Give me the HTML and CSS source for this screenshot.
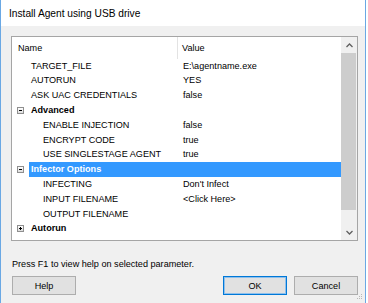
FILE: index.html
```html
<!DOCTYPE html>
<html lang="en">
<head>
    <meta charset="UTF-8">
    <title>Install Agent using USB drive</title>
    <link rel="stylesheet" href="styles.css">
</head>
<body>
    <div class="window">
        <div class="titlebar">Install Agent using USB drive</div>

        <div class="client">
            <div class="grid">
                <div class="grid-main">
                    <div class="grid-head">
                        <span class="col-name">Name</span>
                        <span class="col-value">Value</span>
                    </div>

                    <div class="row">
                        <span class="gutter"></span>
                        <span class="name">TARGET_FILE</span>
                        <span class="value">E:\agentname.exe</span>
                    </div>
                    <div class="row">
                        <span class="gutter"></span>
                        <span class="name">AUTORUN</span>
                        <span class="value">YES</span>
                    </div>
                    <div class="row">
                        <span class="gutter"></span>
                        <span class="name">ASK UAC CREDENTIALS</span>
                        <span class="value">false</span>
                    </div>

                    <div class="row cat">
                        <span class="gutter"><span class="expander"></span></span>
                        <span class="name">Advanced</span>
                    </div>
                    <div class="row">
                        <span class="gutter"></span>
                        <span class="name sub">ENABLE INJECTION</span>
                        <span class="value">false</span>
                    </div>
                    <div class="row">
                        <span class="gutter"></span>
                        <span class="name sub">ENCRYPT CODE</span>
                        <span class="value">true</span>
                    </div>
                    <div class="row">
                        <span class="gutter"></span>
                        <span class="name sub">USE SINGLESTAGE AGENT</span>
                        <span class="value">true</span>
                    </div>

                    <div class="row cat selected">
                        <span class="gutter"><span class="expander"></span></span>
                        <span class="name">Infector Options</span>
                    </div>
                    <div class="row">
                        <span class="gutter"></span>
                        <span class="name sub">INFECTING</span>
                        <span class="value">Don't Infect</span>
                    </div>
                    <div class="row">
                        <span class="gutter"></span>
                        <span class="name sub">INPUT FILENAME</span>
                        <span class="value">&lt;Click Here&gt;</span>
                    </div>
                    <div class="row">
                        <span class="gutter"></span>
                        <span class="name sub">OUTPUT FILENAME</span>
                        <span class="value"></span>
                    </div>

                    <div class="row cat">
                        <span class="gutter"><span class="expander collapsed"></span></span>
                        <span class="name">Autorun</span>
                    </div>
                    <!-- next category, scrolled out of view -->
                    <div class="row cat">
                        <span class="gutter"><span class="expander collapsed"></span></span>
                        <span class="name"></span>
                    </div>
                </div>

                <div class="scrollbar">
                    <div class="arrow">
                        <svg width="7" height="5" viewBox="0 0 7 5"><polyline points="0.5,4 3.5,1 6.5,4" fill="none" stroke="#606060" stroke-width="1.3"/></svg>
                    </div>
                    <div class="track">
                        <div class="thumb"></div>
                    </div>
                    <div class="arrow">
                        <svg width="7" height="5" viewBox="0 0 7 5"><polyline points="0.5,1 3.5,4 6.5,1" fill="none" stroke="#606060" stroke-width="1.3"/></svg>
                    </div>
                </div>
            </div>

            <div class="status">Press F1 to view help on selected parameter.</div>

            <div class="buttons">
                <button class="btn">Help</button>
                <span class="spacer"></span>
                <button class="btn default">OK</button>
                <button class="btn">Cancel</button>
            </div>
        </div>

        <svg class="grip" width="6" height="6" viewBox="0 0 6 6">
            <rect x="4" y="0" width="1" height="1" fill="#b8b8b8"/>
            <rect x="2" y="2" width="1" height="1" fill="#b8b8b8"/>
            <rect x="4" y="2" width="1" height="1" fill="#b8b8b8"/>
            <rect x="0" y="4" width="1" height="1" fill="#b8b8b8"/>
            <rect x="2" y="4" width="1" height="1" fill="#b8b8b8"/>
            <rect x="4" y="4" width="1" height="1" fill="#b8b8b8"/>
        </svg>
    </div>
</body>
</html>
```

FILE: styles.css
```css
body {
    margin: 0;
    background-color: #ffffff;
    font-family: "Liberation Sans", Arial, sans-serif;
    color: #000;
}
.window {
    position: relative;
    width: 366px;
    height: 303px;
    box-sizing: border-box;
    border-left: 1px solid #6aa8e4;
    border-right: 1px solid #6aa8e4;
    display: flex;
    flex-direction: column;
    overflow: hidden;
}
.titlebar {
    height: 26px;
    flex: none;
    padding-left: 8px;
    display: flex;
    align-items: center;
    font-size: 10.2px;
    background-color: #ffffff;
}
.client {
    flex: 1;
    background-color: #f0f0f0;
    padding: 10px 7px 0 10px;
    font-size: 9.1px;
}
.grid {
    height: 205px;
    box-sizing: border-box;
    border: 1px solid #a5a5a5;
    background-color: #ffffff;
    display: flex;
}
.grid-main {
    flex: 1;
    overflow: hidden;
}
.grid-head {
    height: 21.6px;
    display: flex;
    align-items: center;
}
.col-name {
    width: 159px;
    padding-left: 6px;
    height: 100%;
    display: flex;
    align-items: center;
    border-right: 1px solid #e3e3e3;
}
.col-value {
    padding-left: 4px;
}
.row {
    height: 14.8px;
    line-height: 14.8px;
    display: flex;
    white-space: nowrap;
}
.gutter {
    width: 17px;
    flex: none;
    display: flex;
    align-items: center;
}
.name {
    width: 152px;
    flex: none;
    padding-left: 2px;
}
.name.sub {
    width: 140px;
    padding-left: 14px;
}
.cat .name {
    flex: 1;
    font-weight: bold;
}
.selected .name {
    background-color: #3399ff;
    color: #ffffff;
}
.expander {
    position: relative;
    width: 7px;
    height: 7px;
    margin-left: 5px;
    box-sizing: border-box;
    border: 1px solid #8f8f8f;
    background: linear-gradient(#ffffff, #dcdcdc);
}
.expander::before {
    content: "";
    position: absolute;
    left: 1px;
    top: 2px;
    width: 3px;
    height: 1px;
    background-color: #000;
}
.expander.collapsed::after {
    content: "";
    position: absolute;
    left: 2px;
    top: 1px;
    width: 1px;
    height: 3px;
    background-color: #000;
}
.scrollbar {
    width: 16px;
    flex: none;
    background-color: #f0f0f0;
    display: flex;
    flex-direction: column;
}
.arrow {
    height: 16px;
    display: flex;
    align-items: center;
    justify-content: center;
}
.track {
    flex: 1;
    padding: 0 1px 0 0;
}
.thumb {
    height: 157px;
    background-color: #cdcdcd;
}
.status {
    margin-top: 16px;
    padding-left: 1px;
    line-height: 14px;
}
.buttons {
    display: flex;
    gap: 7px;
    margin-top: 5px;
    padding-left: 1px;
}
.spacer {
    flex: 1;
}
.btn {
    width: 64px;
    height: 19px;
    box-sizing: border-box;
    border: 1px solid #adadad;
    background-color: #e1e1e1;
    font-family: "Liberation Sans", Arial, sans-serif;
    font-size: 9.1px;
    color: #000;
    padding: 0;
}
.btn.default {
    border-color: #0078d7;
    box-shadow: inset 0 0 0 1px #8fc0ec;
}
.grip {
    position: absolute;
    right: 2px;
    bottom: 3px;
}
```
